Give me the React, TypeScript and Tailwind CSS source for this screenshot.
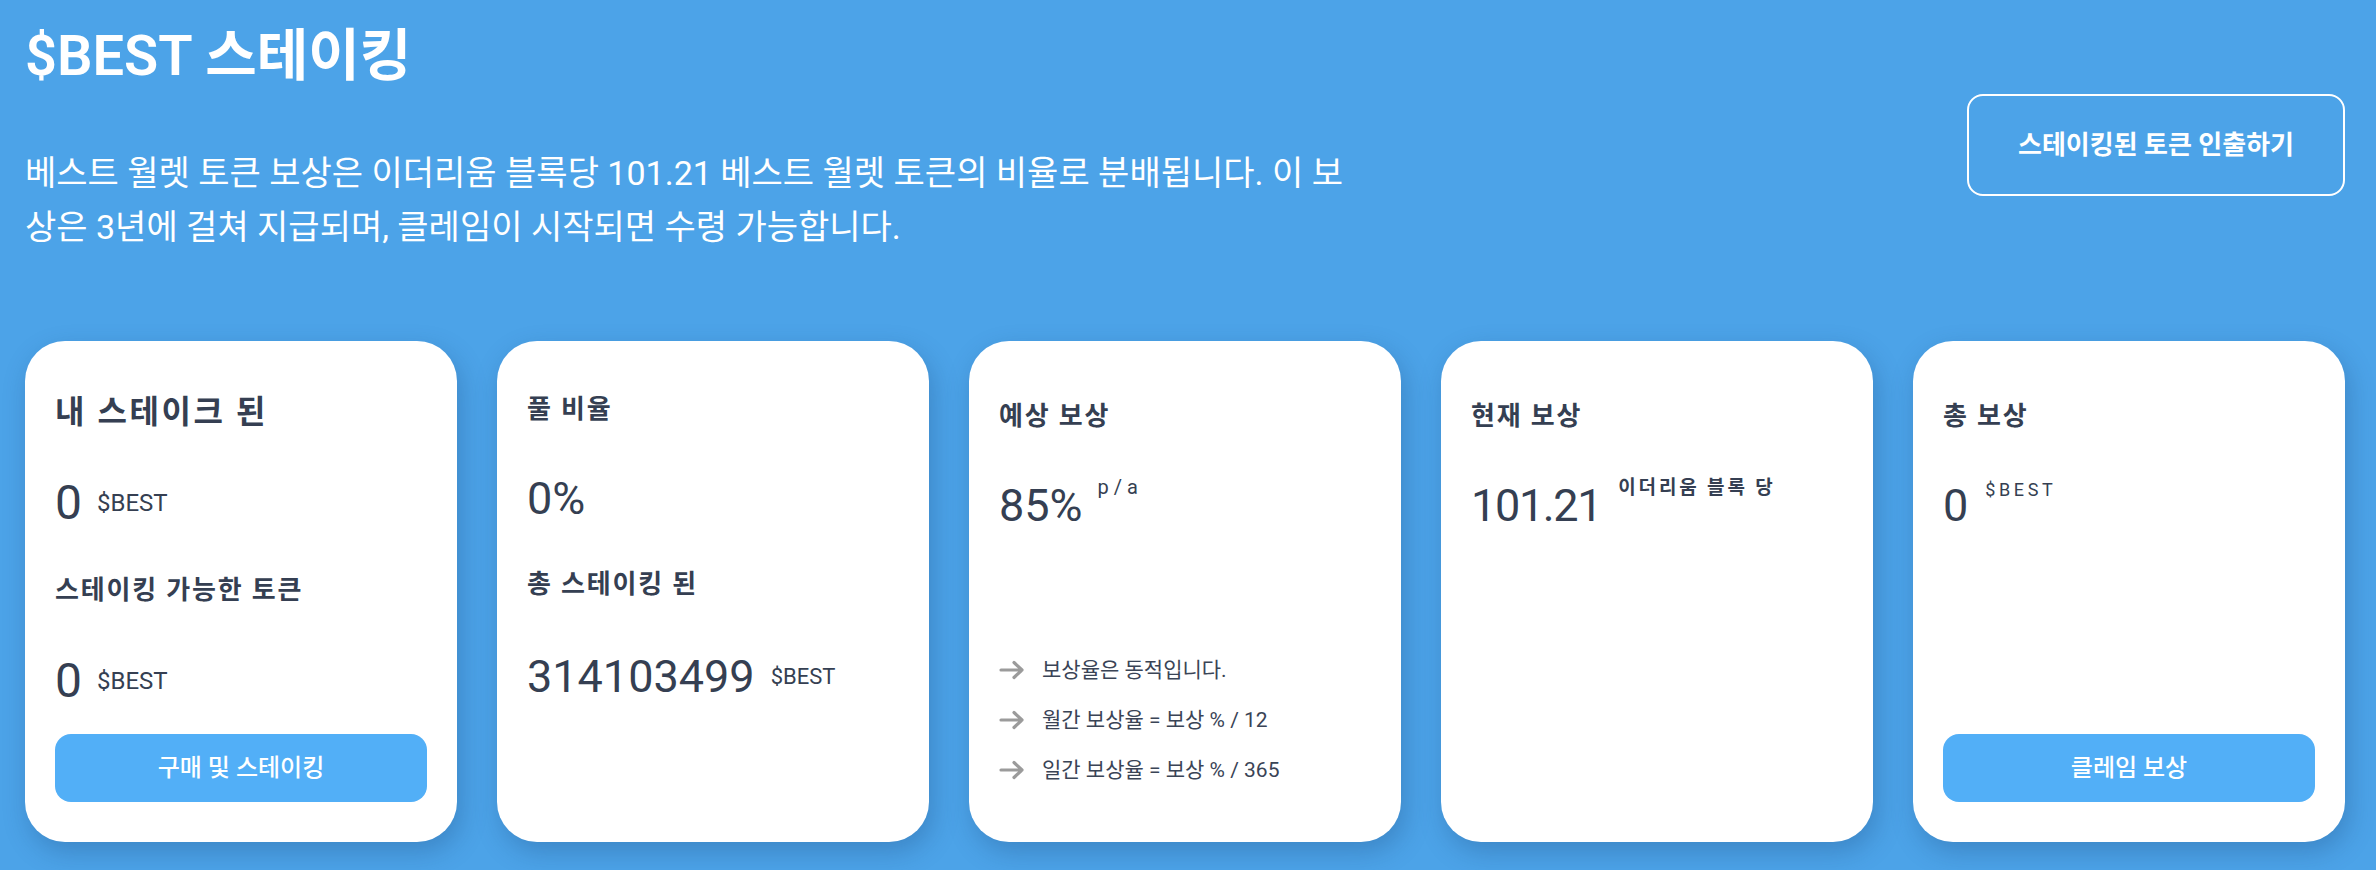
import type { ReactNode } from "react";

const INK = "text-[#353f52]";

function Card({ children, className = "" }: { children: ReactNode; className?: string }) {
  return (
    <div
      className={`h-[501px] bg-white rounded-[40px] px-[30px] pt-[55px] pb-[40px] flex flex-col shadow-[4px_10px_26px_rgba(20,60,110,0.28)] ${INK} ${className}`}
    >
      {children}
    </div>
  );
}

function Arrow() {
  return (
    <svg width="26" height="20" viewBox="0 0 26 20" fill="none" className="shrink-0">
      <path d="M2 10H23M15 2.5L23 10L15 17.5" stroke="#9b9b9b" strokeWidth="3.2" strokeLinecap="round" strokeLinejoin="round" />
    </svg>
  );
}

const RATE_NOTES = ["보상율은 동적입니다.", "월간 보상율 = 보상 % / 12", "일간 보상율 = 보상 % / 365"];

export default function App() {
  return (
    <div className="min-h-screen bg-[#4ca3e8] pl-[25px] pr-[31px] pt-[28px] font-[Roboto,'Noto_Sans_CJK_KR',sans-serif]">
      {/* header */}
      <div className="flex items-start justify-between">
        <div>
          <h1 className="text-[56px] leading-none font-semibold text-white">$BEST 스테이킹</h1>
          <p className="mt-[62px] w-[1325px] text-[34px] leading-[54px] text-white">
            베스트 월렛 토큰 보상은 이더리움 블록당 101.21 베스트 월렛 토큰의 비율로 분배됩니다. 이 보상은 3년에 걸쳐 지급되며, 클레임이 시작되면 수령 가능합니다.
          </p>
        </div>
        <button className="mt-[66px] w-[378px] h-[102px] border-2 border-white rounded-[16px] text-[26px] font-semibold text-white flex items-center justify-center">
          스테이킹된 토큰 인출하기
        </button>
      </div>

      {/* cards */}
      <div className="mt-[87px] grid grid-cols-5 gap-[40px]">
        <Card>
          <h2 className="text-[32px] leading-none font-bold tracking-[0.08em]">내 스테이크 된</h2>
          <div className="mt-[51px] flex items-center">
            <span className="text-[48px] leading-none">0</span>
            <span className="ml-[15px] text-[24px] leading-none">$BEST</span>
          </div>
          <h3 className="mt-[50px] text-[26px] leading-none font-bold tracking-[0.07em]">스테이킹 가능한 토큰</h3>
          <div className="mt-[54px] flex items-center">
            <span className="text-[48px] leading-none">0</span>
            <span className="ml-[15px] text-[24px] leading-none">$BEST</span>
          </div>
          <button className="mt-auto h-[68px] rounded-[16px] bg-[#52aff7] text-white text-[24px] font-medium">
            구매 및 스테이킹
          </button>
        </Card>

        <Card>
          <h2 className="text-[26px] leading-none font-bold tracking-[0.07em]">풀 비율</h2>
          <div className="mt-[54px] text-[45px] leading-none">0%</div>
          <h3 className="mt-[50px] text-[26px] leading-none font-bold tracking-[0.07em]">총 스테이킹 된</h3>
          <div className="mt-[57px] flex items-center">
            <span className="text-[45px] leading-none">314103499</span>
            <span className="ml-[16px] text-[22px] leading-none">$BEST</span>
          </div>
        </Card>

        <Card>
          <h2 className="mt-[7px] text-[26px] leading-none font-bold tracking-[0.07em]">예상 보상</h2>
          <div className="mt-[54px] flex items-start">
            <span className="text-[45px] leading-none">85%</span>
            <span className="ml-[15px] -mt-[6px] text-[20px] leading-none tracking-[0.25em]">p/a</span>
          </div>
          <div className="mt-auto mb-[7px] flex flex-col">
            {RATE_NOTES.map((note) => (
              <div key={note} className="h-[50px] flex items-center gap-[17px]">
                <Arrow />
                <span className="text-[21px] leading-none text-[#3a4456]">{note}</span>
              </div>
            ))}
          </div>
        </Card>

        <Card>
          <h2 className="mt-[7px] text-[26px] leading-none font-bold tracking-[0.07em]">현재 보상</h2>
          <div className="mt-[54px] flex items-start">
            <span className="text-[45px] leading-none tracking-[-0.03em]">101.21</span>
            <span className="ml-[17px] -mt-[5px] text-[19px] leading-none font-semibold tracking-[0.15em]">이더리움 블록 당</span>
          </div>
        </Card>

        <Card>
          <h2 className="mt-[7px] text-[26px] leading-none font-bold tracking-[0.07em]">총 보상</h2>
          <div className="mt-[54px] flex items-start">
            <span className="text-[45px] leading-none">0</span>
            <span className="ml-[17px] -mt-[2px] text-[18px] leading-none tracking-[0.2em]">$BEST</span>
          </div>
          <button className="mt-auto h-[68px] rounded-[16px] bg-[#52aff7] text-white text-[24px] font-medium">
            클레임 보상
          </button>
        </Card>
      </div>
    </div>
  );
}
